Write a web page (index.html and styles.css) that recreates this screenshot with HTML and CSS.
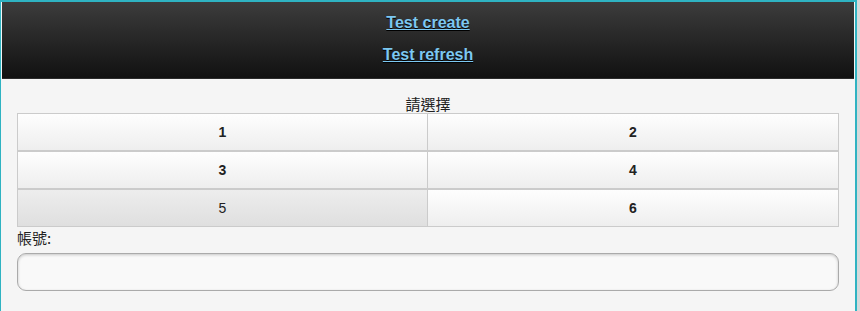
FILE: index.html
```html
<!DOCTYPE html>
<html lang="zh-Hant">
<head>
    <meta charset="UTF-8">
    <meta name="viewport" content="width=device-width, initial-scale=1.0">
    <title>Test</title>
    <link rel="stylesheet" href="styles.css">
</head>
<body>
    <div class="window">
        <div class="header">
            <a href="#" class="head-link">Test create</a>
            <a href="#" class="head-link">Test refresh</a>
        </div>
        <div class="content">
            <div class="choose-label">請選擇</div>
            <div class="choice-grid">
                <div class="choice">1</div>
                <div class="choice">2</div>
                <div class="choice">3</div>
                <div class="choice">4</div>
                <div class="choice active">5</div>
                <div class="choice">6</div>
            </div>
            <label class="field-label" for="account">帳號:</label>
            <input type="text" id="account" class="field-input">
        </div>
    </div>
</body>
</html>
```

FILE: styles.css
```css
body {
    margin: 0;
    padding: 0;
    background-color: #d6dadb;
    font-family: "Liberation Sans", Arial, "Noto Sans CJK TC", sans-serif;
}

.window {
    width: 854px;
    height: 309px;
    border-top: 2px solid #2fb3c2;
    border-left: 1px solid #2fb3c2;
    border-right: 2px solid #2fb3c2;
    background-color: #f5f5f5;
}

.header {
    margin-left: 1px;
    width: 852px;
    height: 64px;
    padding: 5px 0 7px;
    background: linear-gradient(#3c3c3c, #111111);
    border-bottom: 1px solid #2b2b2b;
    box-sizing: content-box;
    text-align: center;
}

.head-link {
    display: block;
    width: max-content;
    margin: 0 auto;
    line-height: 32px;
    font-size: 16px;
    font-weight: bold;
    color: #7cc8f2;
    text-shadow: 0 1px 0 #000;
}

.content {
    padding: 16px 16px 0 16px;
}

.choose-label {
    text-align: center;
    font-family: "Noto Sans CJK TC", sans-serif;
    font-size: 15px;
    line-height: 18px;
    color: #222;
}

.choice-grid {
    display: grid;
    grid-template-columns: 1fr 1fr;
    width: 822px;
}

.choice {
    height: 36px;
    line-height: 36px;
    border: 1px solid #cbcbcb;
    background: linear-gradient(#fefefe, #eeeeee);
    text-align: center;
    font-size: 14px;
    font-weight: bold;
    color: #222;
}

.choice:nth-child(even) {
    border-left: none;
}

.choice.active {
    background: linear-gradient(#ededed, #dfdfdf);
    font-weight: normal;
}

.field-label {
    display: block;
    margin-top: 1px;
    font-family: "Noto Sans CJK TC", sans-serif;
    font-size: 15px;
    line-height: 19px;
    color: #222;
}

.field-input {
    display: block;
    margin-top: 6px;
    width: 822px;
    height: 38px;
    box-sizing: border-box;
    border: 1px solid #aaaaaa;
    border-radius: 9px;
    background-color: #f9f9f9;
    box-shadow: inset 0 1px 3px rgba(0, 0, 0, 0.2);
    outline: none;
}
```
